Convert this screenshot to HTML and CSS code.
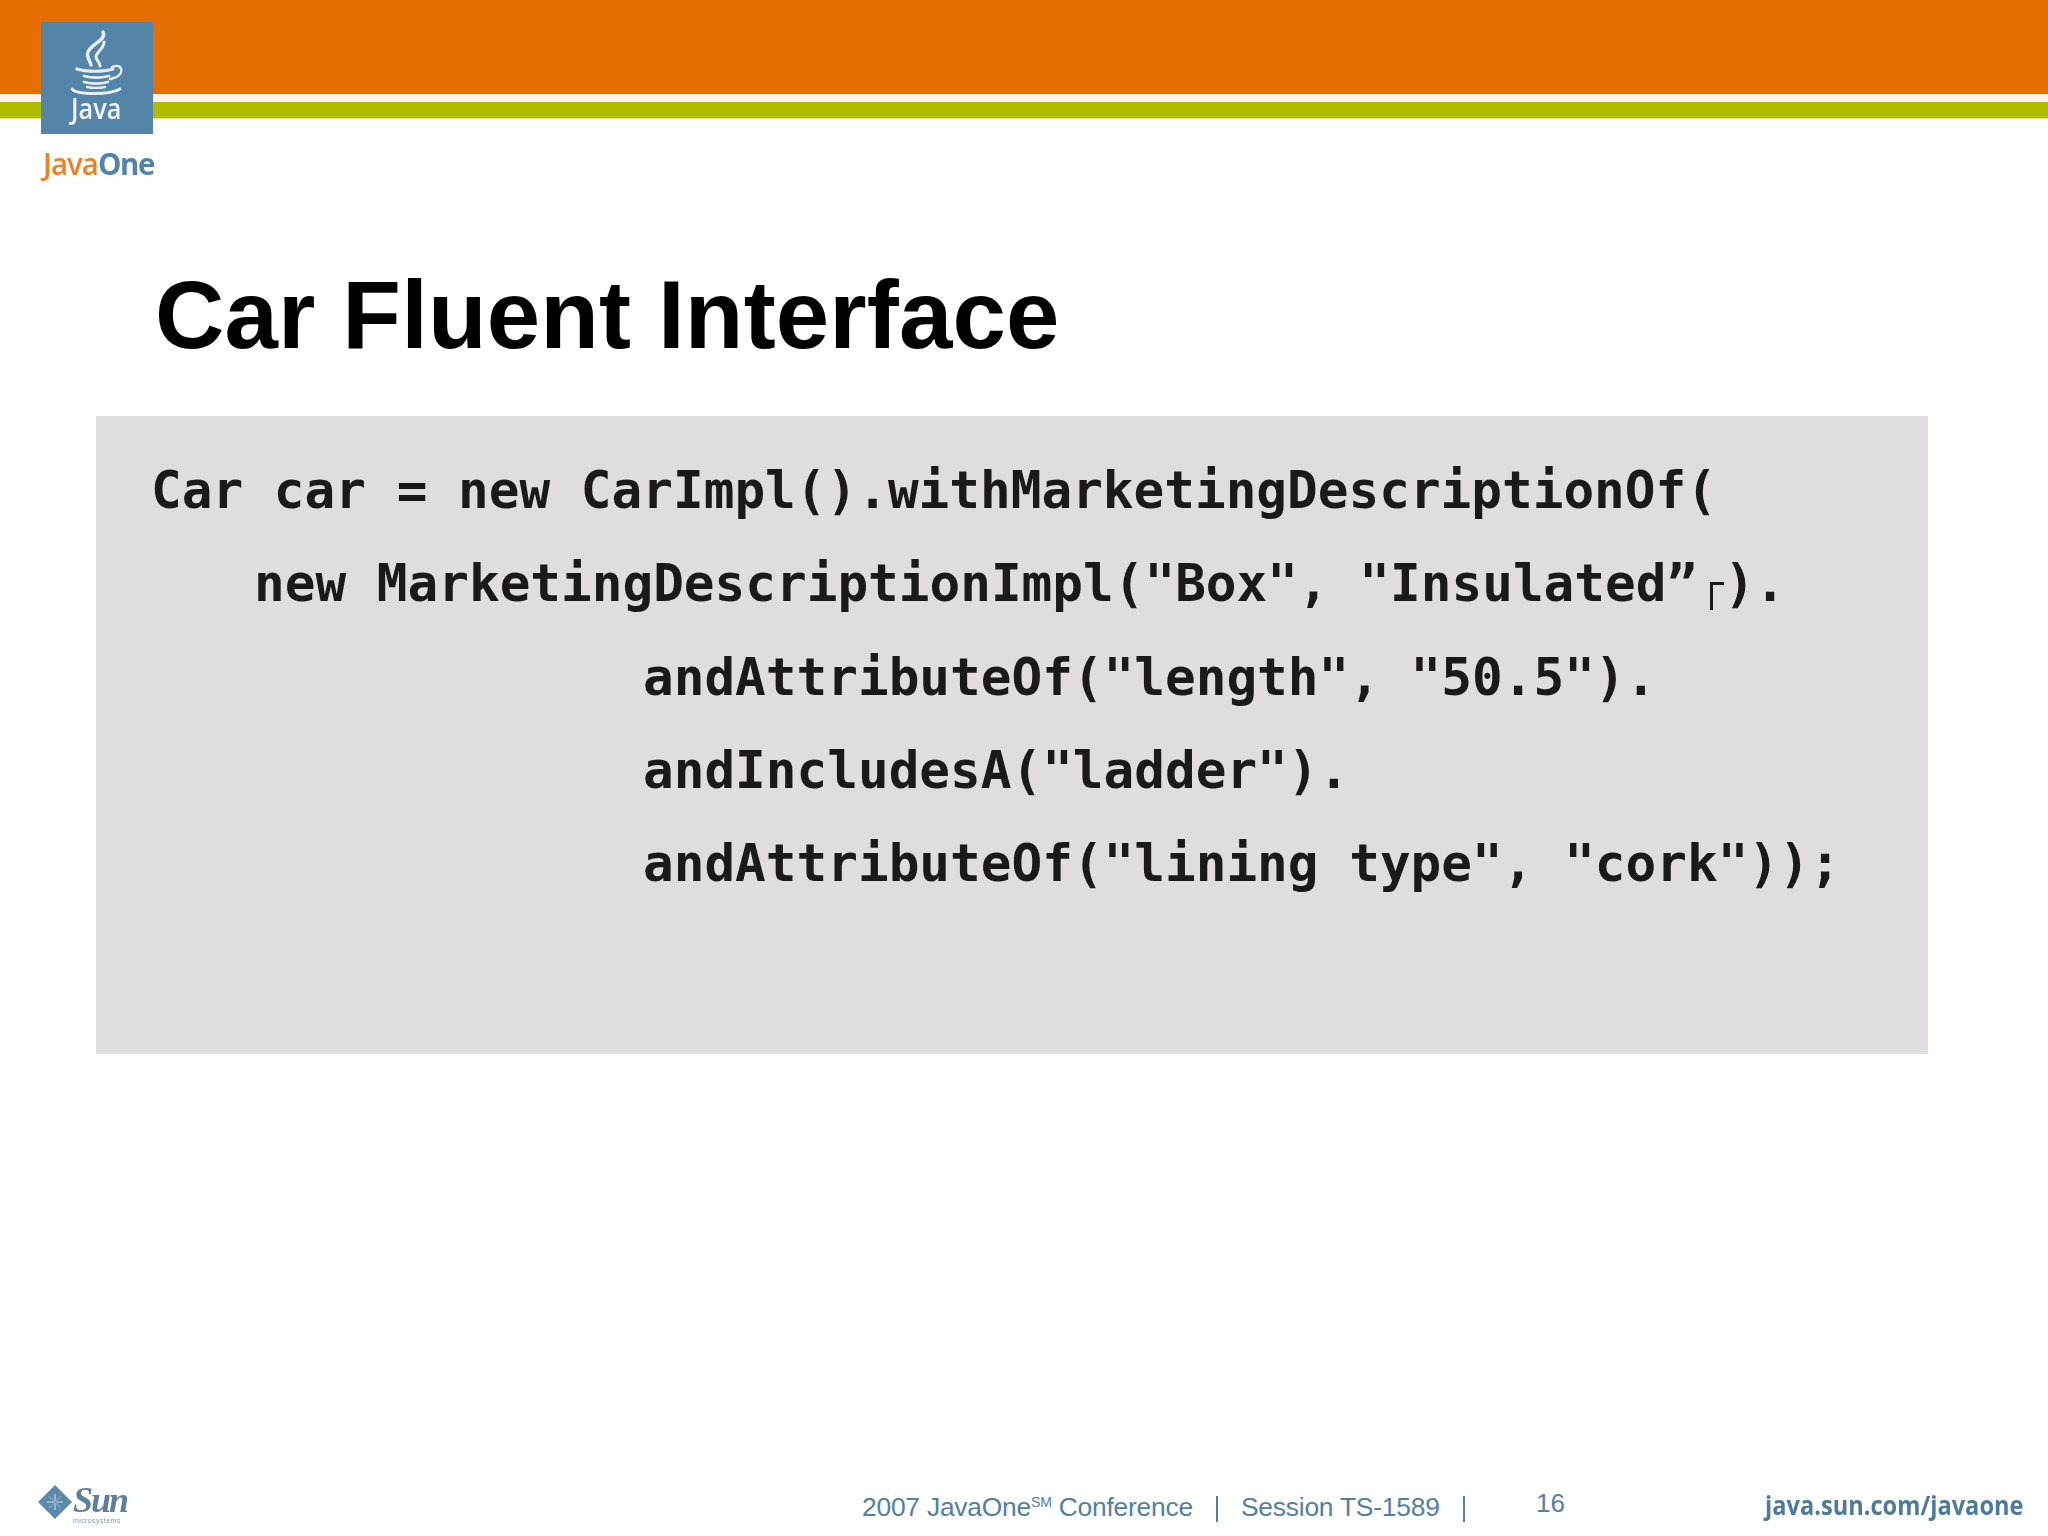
FILE: index.html
```html
<!DOCTYPE html>
<html lang="en">
<head>
<meta charset="utf-8">
<title>Car Fluent Interface</title>
<link rel="stylesheet" href="styles.css">
</head>
<body>
<div class="slide">
  <header class="banner">
    <div class="band-orange"></div>
    <div class="band-white"></div>
    <div class="band-green"></div>
    <div class="java-logo">
      <svg class="java-cup" viewBox="0 0 112 112" width="112" height="112" aria-hidden="true">
        <g fill="none" stroke="#e8eff4" stroke-linecap="round">
          <path d="M62 10C66 18 50 22 47 30C45 35 49 38 50 43" stroke-width="3.4"/>
          <path d="M63 20C63 27 55 30 55 35C55 38 59 40 59 44" stroke-width="3"/>
          <path d="M36 47C46 50 62 50 72 47" stroke-width="3.2"/>
          <path d="M71 45C81 41 83 50 77 54C75 56 72 56 69 57" stroke-width="2.4"/>
          <path d="M43 54C50 56 60 56 68 54" stroke-width="2.8"/>
          <path d="M43 60C50 62 60 62 67 60" stroke-width="2.8"/>
          <path d="M46 65C51 66 59 66 64 65" stroke-width="2.4"/>
          <path d="M31 67C36 73 70 73 79 67" stroke-width="2.8"/>
        </g>
      </svg>
      <span class="java-word">Java</span>
    </div>
    <div class="javaone"><span class="j-orange">Java</span><span class="j-blue">One</span></div>
  </header>

  <h1 class="title">Car Fluent Interface</h1>

  <section class="code-box">
    <div class="code">
      <div class="line">Car car = new CarImpl().withMarketingDescriptionOf(</div>
      <div class="line indent-one">new MarketingDescriptionImpl("Box", "Insulated”<span class="cursor"></span>).</div>
      <div class="line indent-two">andAttributeOf("length", "50.5").</div>
      <div class="line indent-two">andIncludesA("ladder").</div>
      <div class="line indent-two">andAttributeOf("lining type", "cork"));</div>
    </div>
  </section>

  <footer class="footer">
    <div class="sun">
      <svg class="sun-mark" viewBox="0 0 34 34" width="34" height="34" aria-hidden="true">
        <path d="M17 0L34 17L17 34L0 17Z" fill="#5d8aab"/>
        <path d="M17 9V25M9 17H25" stroke="#a9c4d8" stroke-width="1.6"/>
        <path d="M11 11L23 23M23 11L11 23" stroke="#7fa5c0" stroke-width="1.4"/>
      </svg>
      <div class="sun-text">
        <span class="sun-word">Sun</span>
        <span class="sun-tag">microsystems</span>
      </div>
    </div>
    <div class="meta">2007 JavaOne<sup class="sm">SM</sup> Conference<i class="sep"></i>Session TS-1589<i class="sep"></i></div>
    <div class="page">16</div>
    <div class="url">java.sun.com/javaone</div>
  </footer>
</div>
</body>
</html>
```
FILE: styles.css
```css
* { box-sizing: border-box; }
html, body { margin: 0; padding: 0; background: #fff; }
.slide {
  width: 2048px;
  height: 1536px;
  display: flex;
  flex-direction: column;
  position: relative;
  overflow: hidden;
  font-family: "Liberation Sans", Arial, sans-serif;
}
.banner { height: 119px; position: relative; flex: none; }
.band-orange { height: 94px; background: #e56e00; }
.band-white { height: 8px; background: #fdf3e6; }
.band-green { height: 17px; background: #b0bc00; border-bottom: 1px solid #dfe38f; }
.java-logo {
  position: absolute;
  left: 41px;
  top: 22px;
  width: 112px;
  height: 112px;
  background: #5484a8;
  filter: blur(0.6px);
}
.java-cup { position: absolute; left: 0; top: 0; }
.java-word {
  position: absolute;
  left: 30px;
  top: 67px;
  font-family: "Open Sans", sans-serif;
  font-size: 28px;
  font-weight: 600;
  line-height: 38px;
  color: #f0f4f7;
  transform: scaleX(0.9);
  transform-origin: left top;
}
.javaone {
  position: absolute;
  left: 43px;
  top: 143px;
  font-family: "Open Sans", sans-serif;
  font-size: 31px;
  line-height: 40px;
  font-weight: 600;
  letter-spacing: -1px;
  transform: scaleX(0.95);
  transform-origin: left top;
  filter: blur(0.4px);
}
.j-orange { color: #e8832a; }
.j-blue { color: #5484a8; font-weight: 700; letter-spacing: -1.5px; }
.title {
  margin: 141px 0 0 155px;
  font-size: 96px;
  line-height: 110px;
  font-weight: 700;
  color: #000;
  letter-spacing: 0.15px;
  flex: none;
}
.code-box {
  margin: 46px 0 0 96px;
  width: 1832px;
  height: 638px;
  padding: 28px 0 0 55px;
  background: #dfdde0;
  flex: none;
}
.code {
  font-family: "DejaVu Sans Mono", monospace;
  font-weight: 700;
  font-size: 51px;
  line-height: 93.3px;
  color: #1a1a1c;
}
.line { white-space: pre; height: 93.3px; }
.indent-one { padding-left: 103px; }
.indent-two { padding-left: 492px; }
.cursor {
  display: inline-block;
  width: 14px;
  height: 28px;
  border-left: 3px solid #1a1a1c;
  border-top: 3px solid #1a1a1c;
  margin: 0 0 0 13px;
  vertical-align: -9px;
}
.footer {
  margin-top: auto;
  height: 70px;
  padding-top: 4px;
  display: flex;
  align-items: flex-start;
  color: #53809f;
  flex: none;
  position: relative;
}
.sun {
  width: 862px;
  padding: 13px 0 0 38px;
  display: flex;
  gap: 1px;
  filter: blur(0.7px);
  flex: none;
}
.sun-mark { margin-top: 2px; }
.sun-text { display: flex; flex-direction: column; }
.sun-word {
  font-family: "Liberation Serif", serif;
  font-style: italic;
  font-weight: 700;
  font-size: 36px;
  line-height: 34px;
  letter-spacing: -2px;
  color: #5d7f99;
}
.sun-tag { font-size: 7px; line-height: 8px; letter-spacing: 0.4px; color: #7d97aa; }
.meta {
  font-size: 26.4px;
  line-height: 30px;
  padding-top: 22px;
  white-space: nowrap;
  width: 674px;
  flex: none;
  letter-spacing: -0.22px;
}
.sm { font-size: 14px; line-height: 0; vertical-align: 9px; }
.sep {
  display: inline-block;
  width: 2px;
  height: 26px;
  background: #53809f;
  margin: 0 23px 0 23px;
  vertical-align: -6px;
}
.page {
  font-size: 26px;
  line-height: 30px;
  padding-top: 18px;
  width: 229px;
  flex: none;
}
.url {
  font-family: "Open Sans", sans-serif;
  font-weight: 700;
  font-size: 27px;
  line-height: 32px;
  padding-top: 19px;
  color: #4f7b9b;
  white-space: nowrap;
  transform: scaleX(0.875);
  transform-origin: left top;
}
```
